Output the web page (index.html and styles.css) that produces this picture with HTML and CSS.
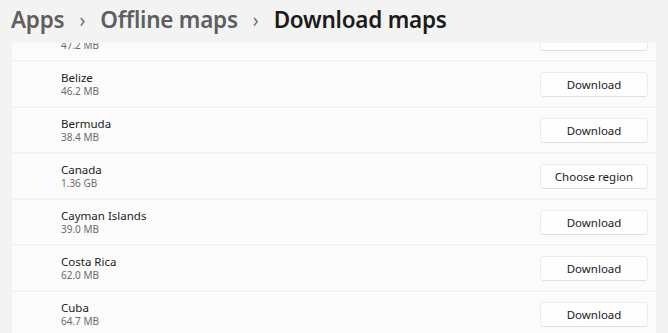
FILE: index.html
```html
<!DOCTYPE html>
<html lang="en">
<head>
  <meta charset="UTF-8">
  <title>Download maps</title>
  <link rel="stylesheet" href="styles.css">
</head>
<body>
  <div class="header">
    <span class="crumb">Apps</span>
    <span class="chevron">&#8250;</span>
    <span class="crumb">Offline maps</span>
    <span class="chevron">&#8250;</span>
    <span class="crumb current">Download maps</span>
  </div>

  <div class="panel">
    <div class="list">
      <div class="row">
        <div class="info">
          <div class="name">Barbados</div>
          <div class="size">47.2 MB</div>
        </div>
        <button class="button">Download</button>
      </div>
      <div class="row">
        <div class="info">
          <div class="name">Belize</div>
          <div class="size">46.2 MB</div>
        </div>
        <button class="button">Download</button>
      </div>
      <div class="row">
        <div class="info">
          <div class="name">Bermuda</div>
          <div class="size">38.4 MB</div>
        </div>
        <button class="button">Download</button>
      </div>
      <div class="row">
        <div class="info">
          <div class="name">Canada</div>
          <div class="size">1.36 GB</div>
        </div>
        <button class="button">Choose region</button>
      </div>
      <div class="row">
        <div class="info">
          <div class="name">Cayman Islands</div>
          <div class="size">39.0 MB</div>
        </div>
        <button class="button">Download</button>
      </div>
      <div class="row">
        <div class="info">
          <div class="name">Costa Rica</div>
          <div class="size">62.0 MB</div>
        </div>
        <button class="button">Download</button>
      </div>
      <div class="row">
        <div class="info">
          <div class="name">Cuba</div>
          <div class="size">64.7 MB</div>
        </div>
        <button class="button">Download</button>
      </div>
    </div>
  </div>
</body>
</html>
```

FILE: styles.css
```css
* {
  margin: 0;
  padding: 0;
  box-sizing: border-box;
  font-family: 'Noto Sans', 'Open Sans', sans-serif;
}

body {
  background: #f3f3f3;
  height: 333px;
  overflow: hidden;
}

.header {
  height: 43px;
  padding: 0 0 4px 11px;
  display: flex;
  align-items: center;
  gap: 15px;
  background: #f3f3f3;
}

.crumb {
  font-size: 22.5px;
  line-height: 28px;
  font-weight: 600;
  color: #5f5f5f;
  letter-spacing: -0.25px;
}

.crumb.current {
  color: #1b1b1b;
}

.chevron {
  font-size: 19px;
  line-height: 24px;
  color: #707070;
}

.panel {
  margin: 0 12px;
  height: 290px;
  overflow: hidden;
}

.list {
  margin-top: -27px;
  display: flex;
  flex-direction: column;
  gap: 2px;
}

.row {
  height: 44px;
  background: #fbfbfb;
  display: flex;
  align-items: center;
  justify-content: space-between;
  padding: 0 8px 0 49px;
}

.name {
  font-size: 11.5px;
  color: #1b1b1b;
  line-height: 15px;
}

.size {
  font-size: 10px;
  color: #6b6b6b;
  line-height: 13px;
}

.button {
  width: 108px;
  height: 25px;
  background: #fefefe;
  border: 1px solid #ececec;
  border-bottom-color: #e0e0e0;
  border-radius: 4px;
  font-size: 11.5px;
  color: #1b1b1b;
  cursor: pointer;
}
```
